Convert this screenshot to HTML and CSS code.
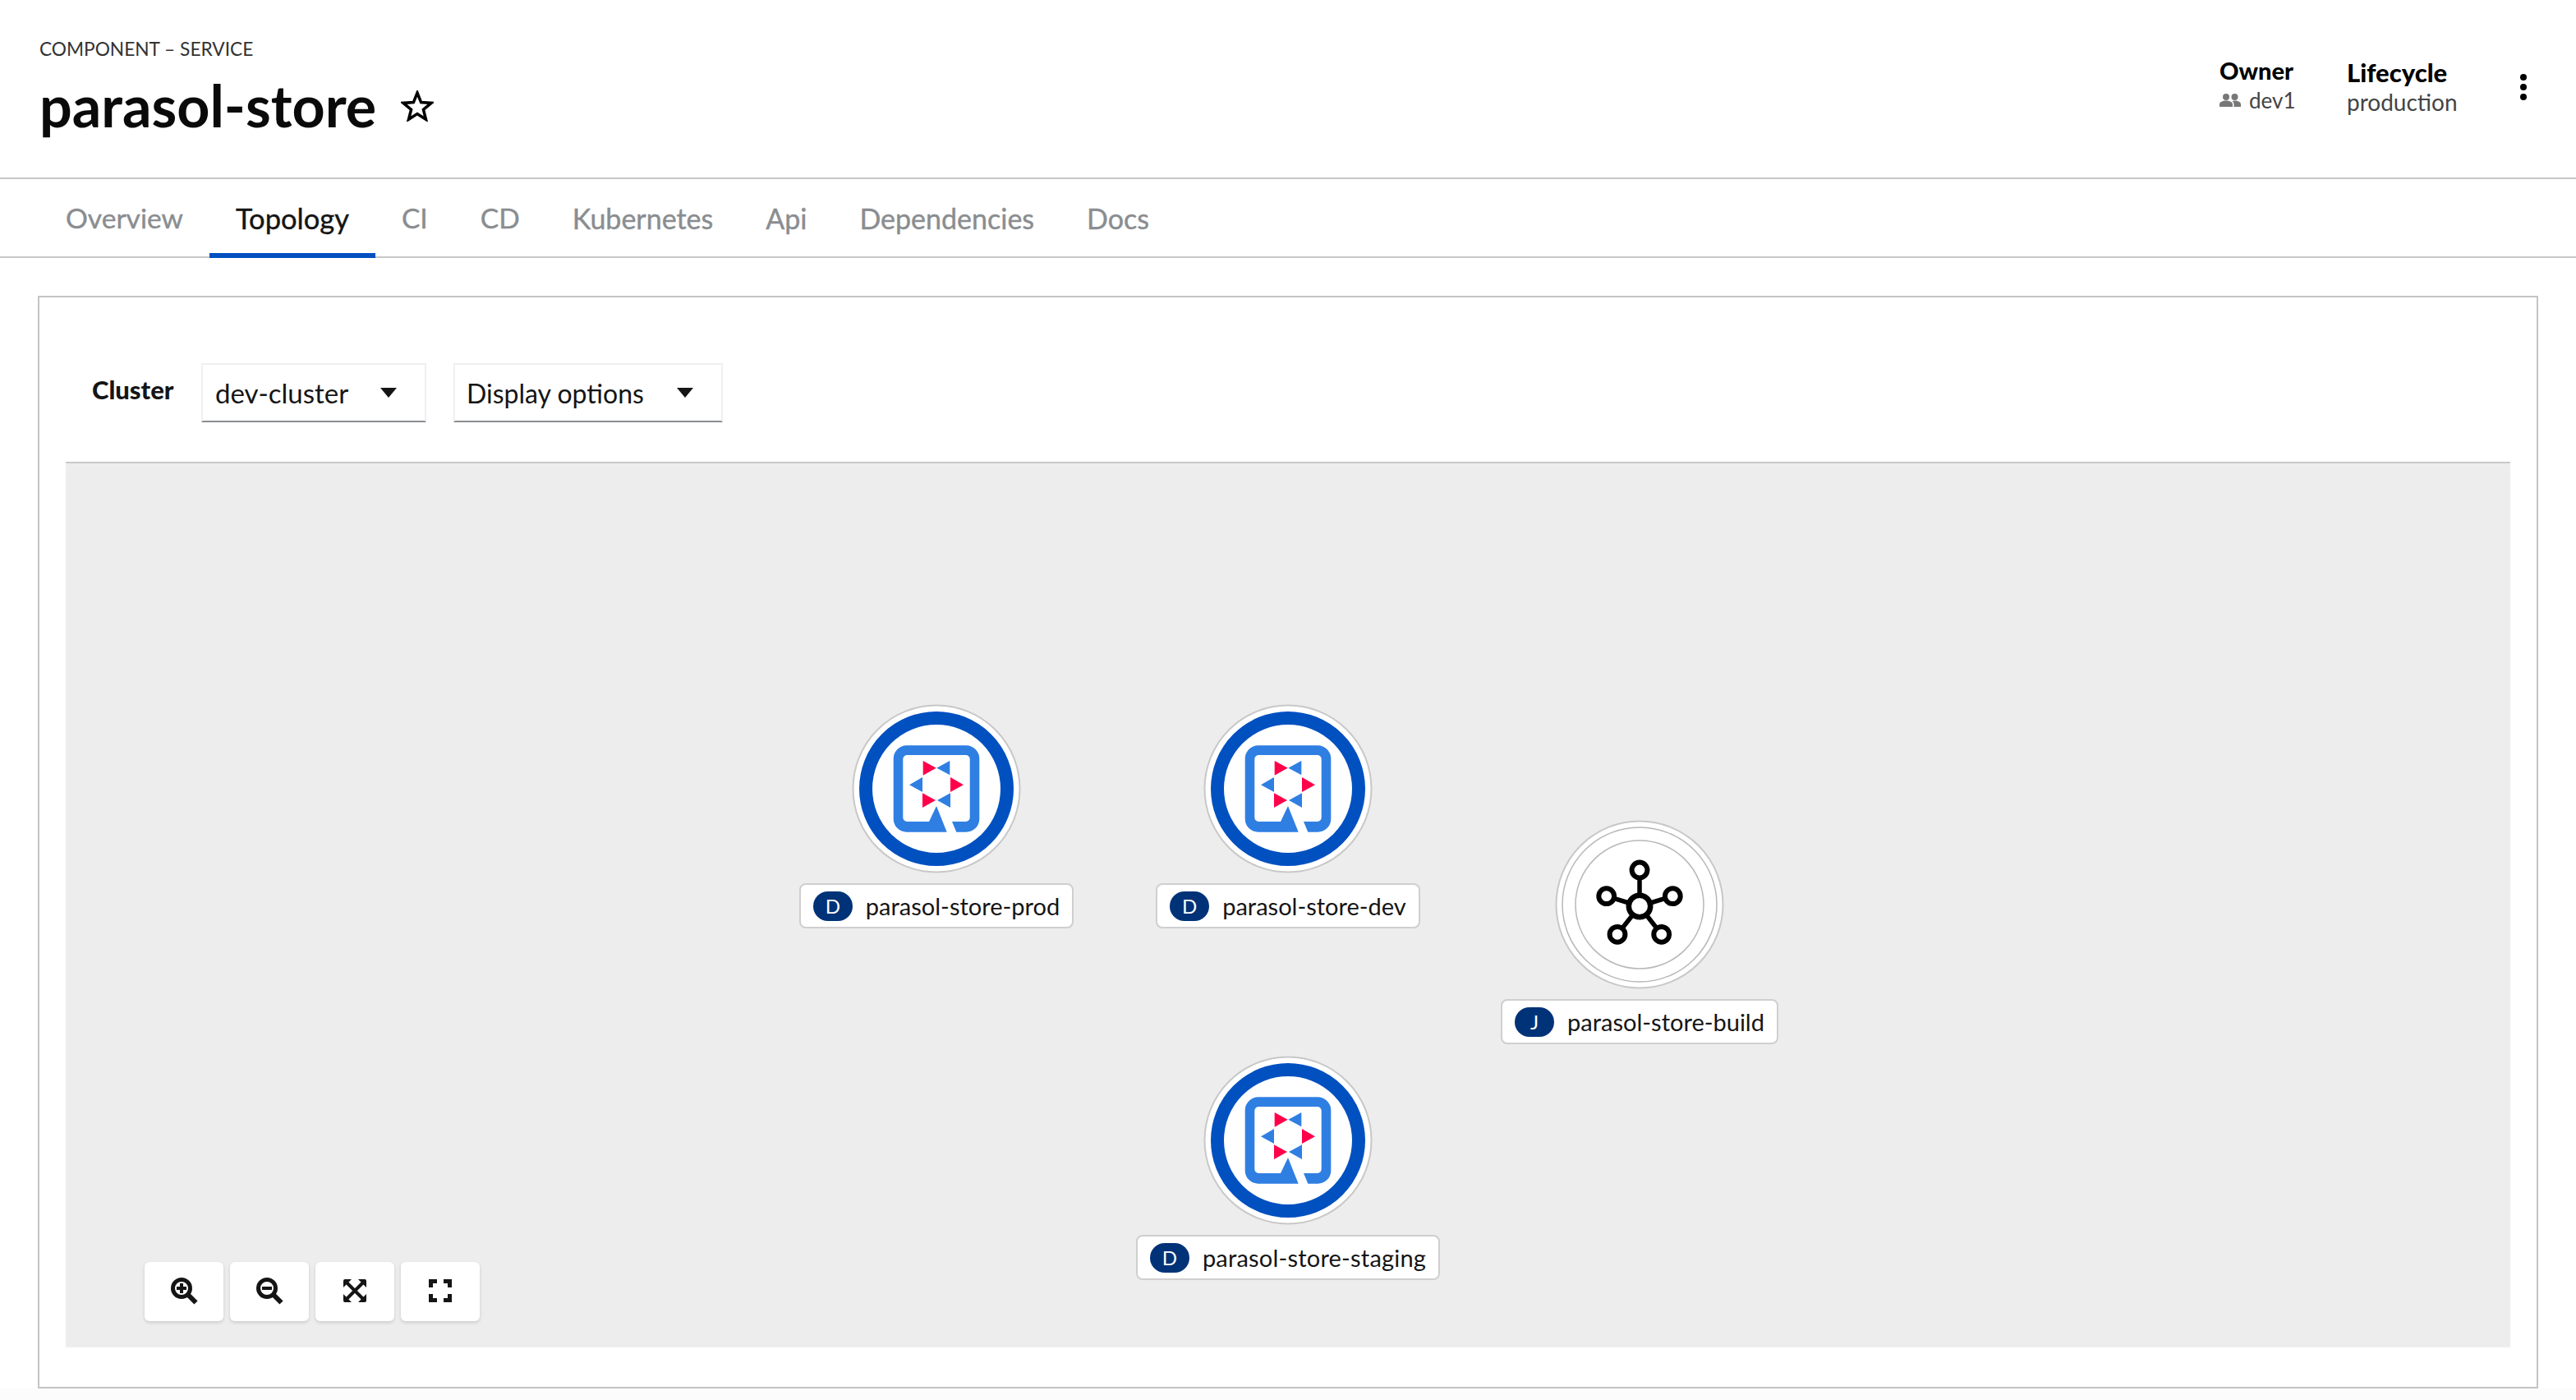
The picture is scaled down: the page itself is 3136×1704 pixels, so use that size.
FILE: index.html
```html
<!DOCTYPE html>
<html lang="en">
<head>
<meta charset="utf-8">
<title>parasol-store</title>
<link rel="stylesheet" href="styles.css">
</head>
<body>
<header class="header">
  <div class="heading">
    <div class="kind">COMPONENT – SERVICE</div>
    <div class="title-row">
      <h1 class="title">parasol-store</h1>
      <svg class="star" viewBox="0 0 40 38"><polygon points="20,3 24.6,14.6 37,15.4 27.4,23.3 30.5,35.3 20,28.6 9.5,35.3 12.6,23.3 3,15.4 15.4,14.6"/></svg>
    </div>
  </div>
  <div class="meta">
    <div class="meta-col owner">
      <div class="meta-label">Owner</div>
      <div class="meta-value dev">
        <svg class="people" viewBox="0 0 26 18"><circle cx="8" cy="5" r="4"/><circle cx="18.500" cy="5" r="4"/><path d="M0 17v-3c0-3 4-4.500 8-4.500s8 1.500 8 4.500v3zM17.500 17v-3c0-1.700-.8-3-2-4 1-.3 2-.5 3-.5 4 0 7.500 1.500 7.500 4.500v3z"/></svg>
        dev1
      </div>
    </div>
    <div class="meta-col lifecycle">
      <div class="meta-label lifecycle-label">Lifecycle</div>
      <div class="meta-value">production</div>
    </div>
    <svg class="kebab" viewBox="0 0 8 32"><circle cx="4" cy="4" r="4"/><circle cx="4" cy="16" r="4"/><circle cx="4" cy="28" r="4"/></svg>
  </div>
</header>
<nav class="tabs">
  <a class="tab">Overview</a>
  <a class="tab active">Topology</a>
  <a class="tab">CI</a>
  <a class="tab">CD</a>
  <a class="tab tab-wide">Kubernetes</a>
  <a class="tab tab-wide">Api</a>
  <a class="tab tab-wide">Dependencies</a>
  <a class="tab tab-wide">Docs</a>
</nav>
<main class="main">
  <section class="card">
    <div class="toolbar">
      <span class="toolbar-label">Cluster</span>
      <div class="select select-cluster"><span>dev-cluster</span><svg class="caret" viewBox="0 0 20 12"><path d="M0 0h20L10 12z"/></svg></div>
      <div class="select select-display"><span>Display options</span><svg class="caret" viewBox="0 0 20 12"><path d="M0 0h20L10 12z"/></svg></div>
    </div>
    <div class="canvas">
      <svg width="0" height="0" class="defs">
        <defs>
          <g id="quarkus">
            <path class="q-blue" d="M44 7.300H116a16 16 0 0 1 16.300 16V96.700a16 16 0 0 1-16.300 16H104.300L99 100H115.700a5 5 0 0 0 5-5V24a5 5 0 0 0-5-5H44.300a5 5 0 0 0-5 5V95a5 5 0 0 0 5 5H71L80 81L92.700 112.700H44a16 16 0 0 1-16.300-16V23.300a16 16 0 0 1 16.300-16Z"/>
            <polygon class="q-red" points="63.700,26 79.700,34.700 63.700,43.700"/>
            <polygon class="q-blue" points="96.300,26 80.300,34.700 96.300,43.300"/>
            <polygon class="q-red" points="97,46 113,55.300 97,64"/>
            <polygon class="q-blue" points="63,46 47,55.300 63,64"/>
            <polygon class="q-red" points="63,65.300 79,74 63,83"/>
            <polygon class="q-blue" points="97,65.300 81,74 97,83"/>
          </g>
        </defs>
      </svg>

      <div class="node node-prod">
        <svg class="node-icon" viewBox="0 0 204 204"><circle class="ring-outer" cx="102" cy="102" r="101.500"/><circle class="ring-blue" cx="102" cy="102" r="86"/><use href="#quarkus" x="22" y="42"/></svg>
        <div class="node-label"><span class="badge">D</span><span>parasol-store-prod</span></div>
      </div>
      <div class="node node-dev">
        <svg class="node-icon" viewBox="0 0 204 204"><circle class="ring-outer" cx="102" cy="102" r="101.500"/><circle class="ring-blue" cx="102" cy="102" r="86"/><use href="#quarkus" x="22" y="42"/></svg>
        <div class="node-label"><span class="badge">D</span><span>parasol-store-dev</span></div>
      </div>
      <div class="node node-build">
        <svg class="node-icon" viewBox="0 0 204 204">
          <circle class="ring-outer" cx="102" cy="102" r="101.500"/>
          <circle class="ring-thin" cx="102" cy="102" r="94"/>
          <circle class="ring-thin" cx="102" cy="102" r="78"/>
          <g class="job">
            <path class="job-line" d="M102 104V60M102 104L142.300 91.700M102 104L61.700 91.700M102 104L75 138.300M102 104L128.700 138.300"/>
            <circle class="job-hub" cx="102" cy="104" r="13.200"/>
            <circle cx="102" cy="60" r="9.400"/>
            <circle cx="142.300" cy="91.700" r="9.400"/>
            <circle cx="61.700" cy="91.700" r="9.400"/>
            <circle cx="75" cy="138.300" r="9.400"/>
            <circle cx="128.700" cy="138.300" r="9.400"/>
          </g>
        </svg>
        <div class="node-label"><span class="badge">J</span><span>parasol-store-build</span></div>
      </div>
      <div class="node node-staging">
        <svg class="node-icon" viewBox="0 0 204 204"><circle class="ring-outer" cx="102" cy="102" r="101.500"/><circle class="ring-blue" cx="102" cy="102" r="86"/><use href="#quarkus" x="22" y="42"/></svg>
        <div class="node-label"><span class="badge">D</span><span>parasol-store-staging</span></div>
      </div>

      <div class="controls">
        <button class="control">
          <svg viewBox="0 0 96 72"><circle class="glass" cx="45" cy="32" r="10.500"/><path class="handle" d="M53 40L62.500 49.500"/><path class="sign" d="M39 32H51M45 26V38"/></svg>
        </button>
        <button class="control">
          <svg viewBox="0 0 96 72"><circle class="glass" cx="45" cy="32" r="10.500"/><path class="handle" d="M53 40L62.500 49.500"/><path class="sign" d="M39 32H51"/></svg>
        </button>
        <button class="control">
          <svg viewBox="0 0 96 72"><path class="sign" d="M38 25L58 45M58 25L38 45"/><path class="solid" d="M34 23a2 2 0 0 1 2-2h8l-10 10zM62 23a2 2 0 0 0-2-2h-8l10 10zM34 47a2 2 0 0 0 2 2h8l-10-10zM62 47a2 2 0 0 1-2 2h-8l10-10z"/></svg>
        </button>
        <button class="control">
          <svg viewBox="0 0 96 72"><path class="corners" d="M36.500 31V23.500H44M52 23.500H59.500V31M59.500 39V46.500H52M44 46.500H36.500V39"/></svg>
        </button>
      </div>
    </div>
  </section>
</main>
</body>
</html>
```

FILE: styles.css
```css
* { box-sizing: border-box; }
html, body { margin: 0; height: 100%; }
body {
  width: 3136px;
  height: 1704px;
  overflow: hidden;
  background: #fcfcfc;
  color: #151515;
  font-family: "Lato", "Open Sans", sans-serif;
}

/* Header */
.header {
  height: 218px;
  background: #fff;
  border-bottom: 2px solid #c7c7c7;
  display: flex;
  justify-content: space-between;
  padding: 46px 48px 0;
}
.kind { font-size: 22.700px; line-height: 28px; color: #333; }
.title-row { display: flex; align-items: center; gap: 28px; margin-top: 12px; }
.title { margin: 0; font-size: 70px; line-height: 84px; font-weight: 700; color: #0a0a0a; }
.star { width: 40px; height: 38px; margin: 2px 0 0 2px; }
.star polygon { fill: none; stroke: #000; stroke-width: 3.500; stroke-linejoin: miter; }

.meta { display: flex; align-items: flex-start; padding-top: 22px; padding-right: 12px; }
.meta-col { display: flex; flex-direction: column; }
.meta-label { font-size: 29px; line-height: 36px; font-weight: 900; color: #000; }
.lifecycle-label { font-size: 31px; }
.meta-value { font-size: 28px; line-height: 36px; color: #444; display: flex; align-items: center; gap: 10px; }
.dev { font-size: 26px; }
.owner { width: 155px; }
.lifecycle { width: 211px; margin-top: 2px; }
.people { width: 26px; height: 18px; fill: #777; }
.kebab { width: 8px; height: 32px; fill: #000; margin-top: 22px; }

/* Tabs */
.tabs {
  height: 96px;
  background: #fff;
  border-bottom: 2px solid #c7c7c7;
  display: flex;
  padding-left: 48px;
}
.tab {
  padding: 0 32px;
  height: 94px;
  display: flex;
  align-items: center;
  font-size: 33.600px;
  color: #8a8d90;
  -webkit-text-stroke: .4px currentColor;
}
.tab-wide { font-size: 34px; }
.tab.active { color: #151515; font-size: 34.500px; border-bottom: 6px solid #0050c0; height: 96px; padding-top: 4px; }

/* Card */
.main { padding: 46px 46px 0; background: #fff; }
.card {
  background: #fff;
  border: 2px solid #c4c4c4;
  height: 1330px;
  padding: 0 32px;
  display: flex;
  flex-direction: column;
}
.toolbar {
  height: 202px;
  padding: 80px 0 0 32px;
  display: flex;
  align-items: flex-start;
  border-bottom: 2px solid #c9c9c9;
}
.toolbar-label { font-size: 31px; font-weight: 900; line-height: 72px; margin-top: -4px; width: 133px; }
.select {
  height: 72px;
  border: 2px solid #f0f0f0;
  border-bottom-color: #8a8d90;
  display: flex;
  align-items: center;
  justify-content: space-between;
  padding: 0 34px 0 14px;
  font-size: 32px;
}
.select-cluster { width: 274px; font-size: 33px; padding-left: 15px; }
.select-display { width: 328px; margin-left: 33px; }
.caret { width: 20px; height: 12px; fill: #151515; }

/* Canvas */
.canvas { flex: none; height: 1076px; background: #ededed; position: relative; }
.defs { position: absolute; }

.node {
  position: absolute;
  width: 204px;
  display: flex;
  flex-direction: column;
  align-items: center;
  gap: 13px;
}
.node-prod { left: 958px; top: 294px; }
.node-dev { left: 1386px; top: 294px; }
.node-build { left: 1814px; top: 435px; }
.node-staging { left: 1386px; top: 722px; }
.node-staging .node-label { letter-spacing: .2px; }
.node-icon { width: 204px; height: 204px; display: block; overflow: visible; }
.ring-outer { fill: #fff; stroke: #c8c8c8; stroke-width: 2; }
.ring-blue { fill: #fff; stroke: #0050c0; stroke-width: 16; }
.ring-thin { fill: #fff; stroke: #b8b8b8; stroke-width: 1.500; }
.q-blue { fill: #2f7fe3; }
.q-red { fill: #ff004a; }
.job circle { fill: #fff; stroke: #000; stroke-width: 6; }
.job .job-hub { stroke-width: 6.500; }
.job-line { fill: none; stroke: #000; stroke-width: 5.500; }

.node-label {
  flex: none;
  height: 55px;
  display: flex;
  align-items: center;
  gap: 16px;
  padding: 0 15px;
  background: #fff;
  border: 2px solid #cfcfcf;
  border-radius: 8px;
  font-size: 29px;
  color: #151515;
  white-space: nowrap;
}
.badge {
  width: 48px;
  height: 36px;
  border-radius: 18px;
  background: #003278;
  color: #fff;
  font-size: 24px;
  font-weight: 400;
  display: flex;
  align-items: center;
  justify-content: center;
}

.controls { position: absolute; left: 96px; top: 972px; display: flex; gap: 8px; }
.control {
  width: 96px;
  height: 72px;
  padding: 0;
  border: 0;
  border-radius: 6px;
  background: #fff;
  box-shadow: 0 2px 4px rgba(0,0,0,.14);
}
.control svg { display: block; width: 96px; height: 72px; }
.glass { fill: none; stroke: #151515; stroke-width: 5; }
.handle { fill: none; stroke: #151515; stroke-width: 6; }
.sign { fill: none; stroke: #151515; stroke-width: 4; }
.solid { fill: #151515; }
.corners { fill: none; stroke: #151515; stroke-width: 5; }
```
